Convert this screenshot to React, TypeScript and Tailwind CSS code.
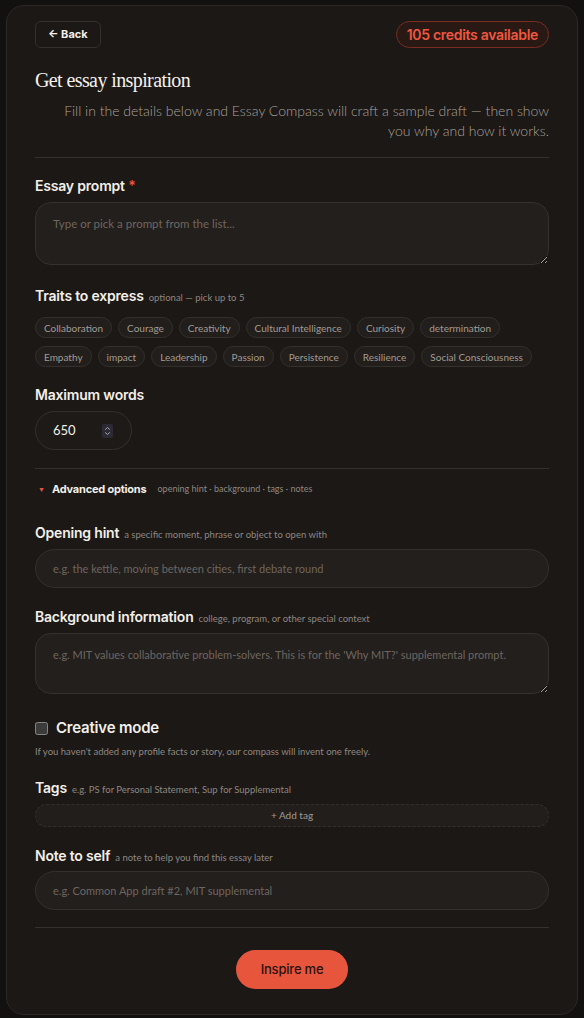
import React from 'react';

const traitsRow1 = ['Collaboration', 'Courage', 'Creativity', 'Cultural Intelligence', 'Curiosity', 'determination'];
const traitsRow2 = ['Empathy', 'impact', 'Leadership', 'Passion', 'Persistence', 'Resilience', 'Social Consciousness'];

const Label: React.FC<{ title: string; hint?: string; required?: boolean; className?: string }> = ({
  title,
  hint,
  required,
  className,
}) => (
  <div className={`flex items-baseline gap-[5px] h-5 leading-5 ${className ?? ''}`}>
    <span className="font-['Inter',sans-serif] font-semibold text-[14px] tracking-[-0.2px] text-[#f3efe9]">
      {title}
      {required && <span className="text-[#e8553d]"> *</span>}
    </span>
    {hint && <span className="text-[9.5px] text-[#8f8780]">{hint}</span>}
  </div>
);

const Chip: React.FC<{ label: string }> = ({ label }) => (
  <button className="h-[21px] px-[8px] rounded-full border border-[#34302c] bg-[#211e1b] text-[10px] text-[#a39b94] leading-none">
    {label}
  </button>
);

export default function App() {
  return (
    <div className="min-h-[1018px] bg-[#131110] px-[6px] pt-[5px] pb-[3px] font-['Lato',sans-serif]">
      <div className="rounded-[18px] border border-[#2c2825] bg-[#1b1816] px-[28px] pt-[15px] pb-[25px]">
        {/* header */}
        <div className="flex items-center justify-between">
          <button className="h-[27px] px-[12px] rounded-[6px] border border-[#34302c] text-[11px] font-bold text-[#f3efe9] font-['Inter',sans-serif]">
            ← Back
          </button>
          <div className="h-[27px] px-[10px] flex items-center rounded-full border border-[#7a2c20] bg-[#35191380] text-[14px] font-semibold text-[#f0573e] font-['Inter',sans-serif] tracking-[-0.3px]">
            105 credits available
          </div>
        </div>

        <h1 className="mt-[19px] h-[26px] leading-[26px] text-[20px] tracking-[-0.6px] text-[#f6f1ea] font-['Liberation_Serif',serif]">
          Get essay inspiration
        </h1>
        <p className="mt-[8px] text-right text-[14px] leading-[20px] text-[#aaa199] font-light">
          Fill in the details below and Essay Compass will craft a sample draft — then show
          <br />
          you why and how it works.
        </p>

        <div className="mt-[16px] h-px bg-[#34302c]" />

        {/* essay prompt */}
        <Label title="Essay prompt" required className="mt-[18px]" />
        <textarea
          placeholder="Type or pick a prompt from the list..."
          className="mt-[6px] block w-full h-[63px] rounded-[16px] border border-[#36312d] bg-[#221f1c] px-[17px] py-[12px] text-[11.5px] text-[#f3efe9] placeholder:text-[#6e6660] outline-none [color-scheme:dark]"
        />

        {/* traits */}
        <Label title="Traits to express" hint="optional — pick up to 5" className="mt-[21px]" />
        <div className="mt-[11px] flex flex-col gap-[8px]">
          <div className="flex gap-[6px]">
            {traitsRow1.map((t) => (
              <Chip key={t} label={t} />
            ))}
          </div>
          <div className="flex gap-[6px]">
            {traitsRow2.map((t) => (
              <Chip key={t} label={t} />
            ))}
          </div>
        </div>

        {/* max words */}
        <Label title="Maximum words" className="mt-[18px]" />
        <div className="mt-[6px] w-[97px] h-[39px] rounded-full border border-[#34302c] bg-[#1d1a18] pl-[17px] pr-[18px] flex items-center justify-between">
          <span className="text-[13px] text-[#f3efe9]">650</span>
          <span className="w-[11px] h-[14px] rounded-[2px] bg-[#2b2a35] flex items-center justify-center">
            <svg width="7" height="10" viewBox="0 0 7 10" fill="none" stroke="#a9a7b3" strokeWidth="1">
              <path d="M1.2 3.6 L3.5 1.5 L5.8 3.6" />
              <path d="M1.2 6.4 L3.5 8.5 L5.8 6.4" />
            </svg>
          </span>
        </div>

        <div className="mt-[18px] h-px bg-[#34302c]" />

        {/* advanced */}
        <div className="mt-[12px] h-4 flex items-center">
          <span className="ml-[3px] text-[7px] text-[#e8553d]">▼</span>
          <span className="ml-[7px] text-[11px] font-bold text-[#f3efe9] font-['Inter',sans-serif] tracking-[-0.2px]">
            Advanced options
          </span>
          <span className="ml-[11px] text-[9px] text-[#8f8780]">opening hint · background · tags · notes</span>
        </div>

        <Label title="Opening hint" hint="a specific moment, phrase or object to open with" className="mt-[26px]" />
        <input
          placeholder="e.g. the kettle, moving between cities, first debate round"
          className="mt-[6px] block w-full h-[39px] rounded-full border border-[#34302c] bg-[#221f1c] px-[17px] text-[11px] text-[#f3efe9] placeholder:text-[#6e6660] outline-none"
        />

        <Label title="Background information" hint="college, program, or other special context" className="mt-[19px]" />
        <textarea
          placeholder="e.g. MIT values collaborative problem-solvers. This is for the 'Why MIT?' supplemental prompt."
          className="mt-[6px] block w-full h-[61px] rounded-[16px] border border-[#36312d] bg-[#221f1c] px-[17px] py-[13px] text-[11px] text-[#f3efe9] placeholder:text-[#6e6660] outline-none [color-scheme:dark]"
        />

        {/* creative mode */}
        <label className="mt-[24px] h-5 flex items-center gap-[8px]">
          <input type="checkbox" className="w-[13px] h-[13px] m-0 [color-scheme:dark]" />
          <span className="font-['Inter',sans-serif] font-semibold text-[15px] tracking-[-0.2px] text-[#f3efe9]">
            Creative mode
          </span>
        </label>
        <p className="mt-[7px] h-[14px] leading-[14px] text-[9.5px] text-[#8f8780]">
          If you haven&apos;t added any profile facts or story, our compass will invent one freely.
        </p>

        {/* tags */}
        <Label title="Tags" hint="e.g. PS for Personal Statement, Sup for Supplemental" className="mt-[19px]" />
        <button className="mt-[6px] block w-full h-[23px] rounded-full border border-dashed border-[#332f2b] bg-[#211e1b] text-[10px] text-[#a39b94]">
          + Add tag
        </button>

        {/* note */}
        <Label title="Note to self" hint="a note to help you find this essay later" className="mt-[19px]" />
        <input
          placeholder="e.g. Common App draft #2, MIT supplemental"
          className="mt-[5px] block w-full h-[39px] rounded-full border border-[#34302c] bg-[#221f1c] px-[17px] text-[11px] text-[#f3efe9] placeholder:text-[#6e6660] outline-none"
        />

        <div className="mt-[17px] h-px bg-[#34302c]" />

        <div className="mt-[22px] flex justify-center">
          <button className="w-[112px] h-[39px] rounded-full bg-[#e8553d] text-[13px] font-medium text-[#2a120c] font-['Inter',sans-serif] tracking-[-0.2px]">
            Inspire me
          </button>
        </div>
      </div>
    </div>
  );
}
